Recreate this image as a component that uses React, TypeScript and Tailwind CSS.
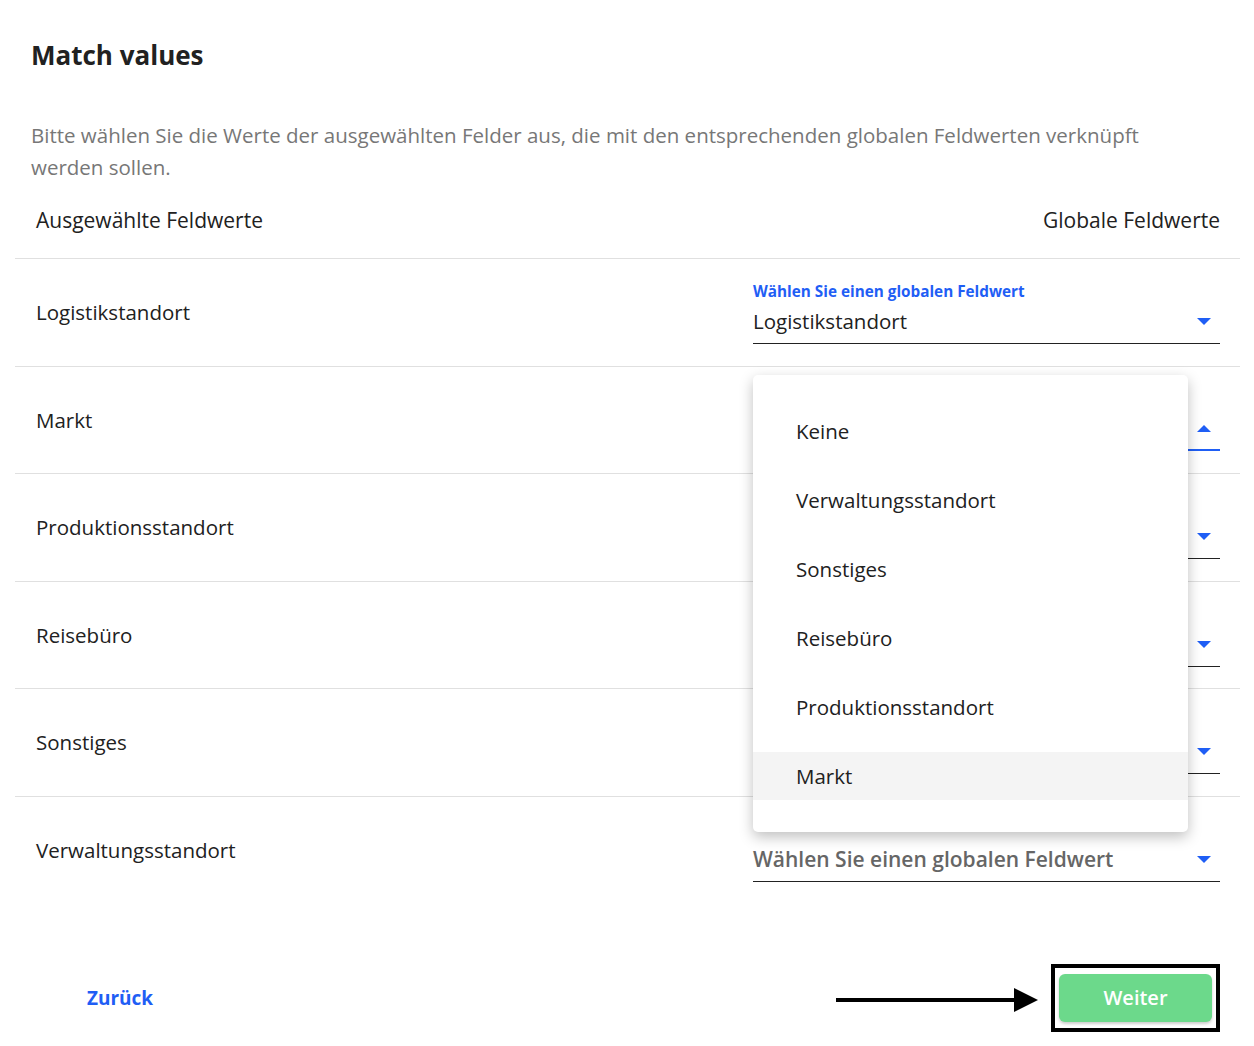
const rows = [
  { name: "Logistikstandort", value: "Logistikstandort", label: true },
  { name: "Markt", value: "", focused: true },
  { name: "Produktionsstandort", value: "" },
  { name: "Reisebüro", value: "" },
  { name: "Sonstiges", value: "" },
  { name: "Verwaltungsstandort", value: "", placeholder: true },
];

const options = ["Keine", "Verwaltungsstandort", "Sonstiges", "Reisebüro", "Produktionsstandort", "Markt"];

function Caret({ up }: { up?: boolean }) {
  return (
    <svg width="14" height="8" viewBox="0 0 14 8" className="mr-[9px]">
      {up ? <path d="M0 7 L7 0 L14 7 Z" fill="#1f5ef5" /> : <path d="M0 0 L14 0 L7 7 Z" fill="#1f5ef5" />}
    </svg>
  );
}

export default function App() {
  return (
    <div className="relative w-[1254px] h-[1046px] bg-white text-[#212121] font-['Open_Sans',sans-serif] overflow-hidden">
      <div className="pl-[15px] pr-[14px]">
        <h1 className="pl-4 pt-[39px] text-[26px] leading-[32px] font-bold">Match values</h1>
        <p className="pl-4 w-[1160px] mt-[48px] text-[20.5px] leading-[32px] text-[#777]">
          Bitte wählen Sie die Werte der ausgewählten Felder aus, die mit den entsprechenden globalen Feldwerten verknüpft werden sollen.
        </p>
        <div className="h-[75px] pl-[21px] pr-[20px] flex items-center justify-between text-[21px]">
          <span>Ausgewählte Feldwerte</span>
          <span>Globale Feldwerte</span>
        </div>
        {rows.map((r) => (
          <div key={r.name} className="h-[107.6px] border-t border-[#e0e0e0] pl-[21px] pr-[20px] flex items-center justify-between">
            <span className="text-[20.5px]">{r.name}</span>
            <div className="w-[467px] flex flex-col">
              <div className="h-[20px] leading-[20px] text-[15.3px] font-bold text-[#1f5ef5]">
                {r.label ? "Wählen Sie einen globalen Feldwert" : ""}
              </div>
              <div
                className={`h-[43px] flex items-center justify-between ${
                  r.focused ? "border-b-2 border-[#1f5ef5]" : "border-b border-[#222]"
                }`}
              >
                <span className={r.placeholder ? "text-[21px] font-semibold text-[#666]" : "text-[20.5px]"}>
                  {r.placeholder ? "Wählen Sie einen globalen Feldwert" : r.value}
                </span>
                <Caret up={r.focused} />
              </div>
            </div>
          </div>
        ))}
        <div className="mt-[60px] flex items-center justify-between pl-[72px] pr-[20px]">
          <span className="text-[19px] font-bold text-[#1f5ef5] mt-[2px]">Zurück</span>
          <div className="flex items-center gap-[13px]">
            <svg width="204" height="26" viewBox="0 0 204 26" className="mt-[4px]">
              <rect x="2" y="11" width="182" height="4" fill="#000" />
              <path d="M180 1 L204 13 L180 25 Z" fill="#000" />
            </svg>
            <div className="border-4 border-black px-1 py-[6px]">
              <button className="block w-[153px] h-[48px] rounded-[6px] bg-[#6cd98b] text-white text-[20px] font-semibold shadow-[0_2px_3px_rgba(0,0,0,0.2)]">
                Weiter
              </button>
            </div>
          </div>
        </div>
      </div>

      <div className="absolute left-[753px] top-[375px] w-[435px] h-[457px] bg-white rounded-[5px] shadow-[0_5px_14px_rgba(0,0,0,0.25)] py-[32px] flex flex-col gap-[21px]">
        {options.map((o, i) => (
          <div
            key={o}
            className={`h-[48px] flex items-center pl-[43px] text-[20.5px] ${i === options.length - 1 ? "bg-[#f4f4f4]" : ""}`}
          >
            {o}
          </div>
        ))}
      </div>
    </div>
  );
}
